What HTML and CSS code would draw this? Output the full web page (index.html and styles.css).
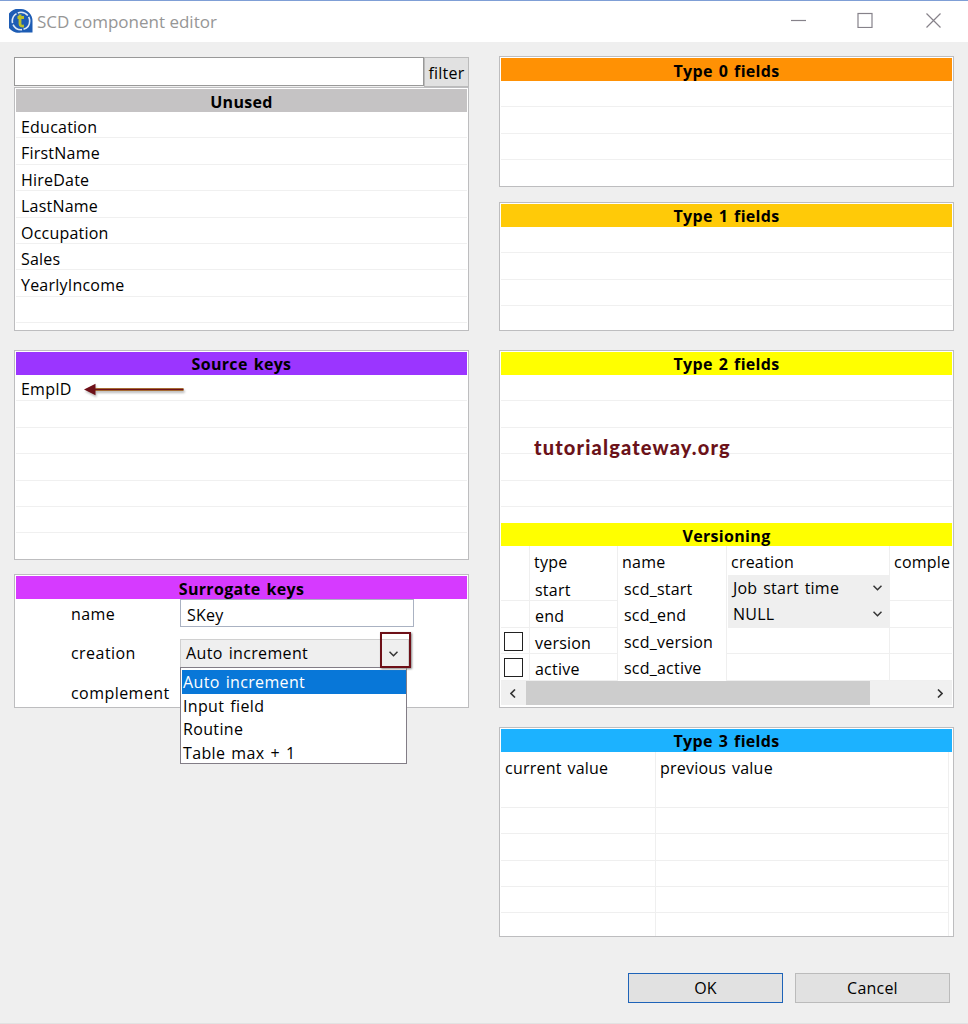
FILE: index.html
```html
<!DOCTYPE html>
<html lang="en">
	<head>
		<meta charset="UTF-8">
		<meta name="viewport" content="width=device-width, initial-scale=1.0">
		<title>SCD component editor</title>
		<link rel="stylesheet" href="styles.css">
	</head>
	<body>
		<header class="titlebar">
			<svg class="logo" width="24" height="24" viewBox="0 0 24 24">
				<path d="M12 0a12 12 0 1 0 0 23.5h11.5V12A12 12 0 0 0 12 0z" fill="#1d5cb4"/>
				<circle cx="12" cy="12" r="8.7" fill="none" stroke="#dfeaf6" stroke-width="1.6" stroke-dasharray="11 1.5"/>
				<path d="M11 5.500v9.500q0 2.500 4 2M8.500 8.500h6.500" fill="none" stroke="#bcc028" stroke-width="2.800"/>
			</svg>
			<span class="title">SCD component editor</span>
			<svg class="controls" width="152" height="16" viewBox="0 0 152 16" fill="none" stroke="#86828a" stroke-width="1.2">
				<path d="M1 8.500h15"/>
				<rect x="68" y="1.500" width="14" height="14"/>
				<path d="M136.500 1.500l14 14M150.500 1.500l-14 14"/>
			</svg>
		</header>
		<main>
			<div class="column">
				<div class="filter">
					<input type="text" class="filter-text">
					<button class="filter-button">filter</button>
				</div>
				<section class="panel unused">
					<h2 class="gray">Unused</h2>
					<div class="row">Education</div>
					<div class="row">FirstName</div>
					<div class="row">HireDate</div>
					<div class="row">LastName</div>
					<div class="row">Occupation</div>
					<div class="row">Sales</div>
					<div class="row">YearlyIncome</div>
					<div class="row"></div>
				</section>
				<section class="panel source">
					<h2 class="purple">Source keys</h2>
					<div class="row">EmpID</div>
					<div class="row"></div>
					<div class="row"></div>
					<div class="row"></div>
					<div class="row"></div>
					<div class="row"></div>
					<div class="row"></div>
					<svg class="arrow" width="104" height="18" viewBox="0 0 104 18">
						<path d="M11 8.500h89.500" stroke="#b98a3c" stroke-width="3"/>
						<path d="M11 8.500h89.500" stroke="#6e1018" stroke-width="1.400"/>
						<path d="M1 8.500l11.500-5.800v11.600z" fill="#6e1018"/>
					</svg>
				</section>
				<section class="panel surrogate">
					<h2 class="magenta">Surrogate keys</h2>
					<div class="form">
						<span class="label">name</span>
						<div class="textbox">SKey</div>
						<span class="label">creation</span>
						<div class="combo">
							<span>Auto increment</span>
							<span class="combo-button">
								<svg width="9" height="6" viewBox="0 0 9 6" fill="none" stroke="#333" stroke-width="1.5"><path d="M.5 .7l4 4 4-4"/></svg>
							</span>
							<div class="options">
								<div class="option selected">Auto increment</div>
								<div class="option">Input field</div>
								<div class="option">Routine</div>
								<div class="option">Table max + 1</div>
							</div>
						</div>
						<span class="label">complement</span>
					</div>
				</section>
			</div>
			<div class="column">
				<section class="panel type0">
					<h2 class="orange">Type 0 fields</h2>
					<div class="row"></div>
					<div class="row"></div>
					<div class="row"></div>
				</section>
				<section class="panel type1">
					<h2 class="amber">Type 1 fields</h2>
					<div class="row"></div>
					<div class="row"></div>
					<div class="row"></div>
				</section>
				<section class="panel type2">
					<h2 class="yellow">Type 2 fields</h2>
					<div class="rows">
						<div class="row"></div>
						<div class="row"></div>
						<div class="row"></div>
						<div class="row"></div>
						<div class="row"></div>
					</div>
					<div class="watermark">tutorialgateway.org</div>
					<h2 class="yellow low">Versioning</h2>
					<div class="versions">
						<div class="cell head"></div>
						<div class="cell head">type</div>
						<div class="cell head">name</div>
						<div class="cell head">creation</div>
						<div class="cell head">comple</div>
						<div class="cell"></div>
						<div class="cell kind">start</div>
						<div class="cell plain">scd_start</div>
						<div class="cell pick">Job start time
							<svg width="9" height="6" viewBox="0 0 9 6" fill="none" stroke="#333" stroke-width="1.5"><path d="M.5 .7l4 4 4-4"/></svg>
						</div>
						<div class="cell"></div>
						<div class="cell"></div>
						<div class="cell kind">end</div>
						<div class="cell plain">scd_end</div>
						<div class="cell pick">NULL
							<svg width="9" height="6" viewBox="0 0 9 6" fill="none" stroke="#333" stroke-width="1.5"><path d="M.5 .7l4 4 4-4"/></svg>
						</div>
						<div class="cell"></div>
						<div class="cell"><span class="check"></span></div>
						<div class="cell kind">version</div>
						<div class="cell plain">scd_version</div>
						<div class="cell"></div>
						<div class="cell"></div>
						<div class="cell"><span class="check"></span></div>
						<div class="cell kind">active</div>
						<div class="cell plain">scd_active</div>
						<div class="cell"></div>
						<div class="cell"></div>
					</div>
					<div class="scrollbar">
						<svg width="6" height="9" viewBox="0 0 6 9" fill="none" stroke="#333" stroke-width="1.6"><path d="M5 .5l-4 4 4 4"/></svg>
						<span class="thumb"></span>
						<svg width="6" height="9" viewBox="0 0 6 9" fill="none" stroke="#333" stroke-width="1.6"><path d="M1 .5l4 4-4 4"/></svg>
					</div>
				</section>
				<section class="panel type3">
					<h2 class="blue">Type 3 fields</h2>
					<div class="values">
						<div class="cell head">current value</div>
						<div class="cell head">previous value</div>
						<div class="cell"></div><div class="cell"></div>
						<div class="cell"></div><div class="cell"></div>
						<div class="cell"></div><div class="cell"></div>
						<div class="cell"></div><div class="cell"></div>
						<div class="cell"></div><div class="cell"></div>
						<div class="cell"></div><div class="cell"></div>
					</div>
				</section>
			</div>
		</main>
		<footer>
			<button class="ok">OK</button>
			<button>Cancel</button>
		</footer>
	</body>
</html>
```
FILE: styles.css
```css
* {
	box-sizing: border-box;
}

body {
	margin: 0;
	height: 1024px;
	overflow: hidden;
	background-color: #efefef;
	border-top: 1px solid #7f9fd6;
	border-bottom: 1px solid #e2e2e2;
	font-family: "Open Sans", "Noto Sans", sans-serif;
	font-size: 16px;
	letter-spacing: 0.22px;
	word-spacing: 1.5px;
	color: #000;
}

.titlebar {
	display: flex;
	align-items: center;
	height: 41px;
	padding: 0 26px 0 9px;
	background-color: #fff;
	color: #969696;
	font-size: 17px;
	letter-spacing: 0;
	word-spacing: 0;
}

.logo {
	margin-bottom: 2px;
}

.title {
	margin: 0 auto 1px 4px;
}

.controls {
	margin-bottom: 3px;
}

main {
	display: grid;
	grid-template-columns: 455px 455px;
	column-gap: 30px;
	height: 895px;
	padding: 14px 14px 0;
}

.column {
	display: flex;
	flex-direction: column;
}

.filter {
	display: flex;
	height: 30px;
	margin-top: 1px;
}

.filter-text {
	width: 410px;
	height: 29px;
	border: 1px solid #999;
	background-color: #fff;
}

.filter-button {
	width: 45px;
	height: 30px;
	padding: 1px 0 0;
}

button {
	border: 1px solid #bbb;
	background-color: #e1e1e1;
	font: inherit;
	letter-spacing: inherit;
	color: #000;
}

.panel {
	position: relative;
	flex: none;
	overflow: hidden;
	border: 1px solid #bdbdbf;
	background-color: #fff;
	padding: 1px 1px 0;
}

.unused { height: 244px; }
.source { height: 210px; margin-top: 19px; }
.surrogate { height: 134px; margin-top: 14px; overflow: visible; }
.type0 { height: 131px; }
.type1 { height: 129px; margin-top: 15px; }
.type2 { height: 358px; margin-top: 19px; }
.type3 { height: 210px; margin-top: 19px; }

h2 {
	height: 23px;
	margin: 0;
	font-size: 16px;
	line-height: 24px;
	font-weight: bold;
	letter-spacing: 0.32px;
	text-align: center;
}

.unused h2,
.surrogate h2,
.type0 h2,
.low {
	line-height: 26px;
}

.gray { background-color: #c5c3c4; }
.purple { background-color: #9b35ff; }
.magenta { background-color: #d63aff; }
.orange { background-color: #ff9104; }
.amber { background-color: #ffca08; }
.yellow { background-color: #ffff00; }
.blue { background-color: #1cb2ff; }

.row {
	height: 26.4px;
	padding-left: 5px;
	border-bottom: 1px solid #f0f0f0;
	line-height: 28px;
}

.unused .row {
	line-height: 30px;
}

.rows {
	height: 148px;
	overflow: hidden;
}

.arrow {
	position: absolute;
	left: 68px;
	top: 30px;
	filter: drop-shadow(1px 2px 1px #bbb);
}

.watermark {
	position: absolute;
	left: 34px;
	top: 84px;
	font-family: Lato, sans-serif;
	font-weight: 900;
	font-size: 20px;
	letter-spacing: 1.15px;
	color: #6b1219;
}

.form {
	display: grid;
	grid-template-columns: 109px 233px;
	grid-template-rows: 28px 29px 29px;
	row-gap: 11px;
	padding-left: 55px;
}

.label {
	line-height: 31px;
	letter-spacing: 0.45px;
}

.textbox {
	width: 234px;
	height: 28px;
	padding-left: 6px;
	border: 1px solid #aab2c2;
	line-height: 30px;
}

.combo {
	position: relative;
	display: flex;
	height: 29px;
	width: 229px;
	margin-top: 1px;
	padding-left: 5px;
	border: 1px solid #d0d0d0;
	background-color: #efefef;
	line-height: 27px;
	letter-spacing: 0.35px;
}

.combo-button {
	position: absolute;
	right: -3px;
	top: -8px;
	z-index: 1;
	display: flex;
	align-items: center;
	justify-content: center;
	width: 31px;
	height: 36px;
	padding: 7px 4px 0 0;
	border: 2px solid #6e1018;
	box-shadow: 1px 1px 2px #888;
}

.options {
	position: absolute;
	left: -1px;
	top: 27px;
	width: 227px;
	height: 97px;
	padding: 2px 0 2px 1px;
	border: 1px solid #827d86;
	background-color: #fff;
}

.option {
	height: 23.5px;
	padding-left: 1px;
	line-height: 24px;
}

.selected {
	background-color: #0877d8;
	color: #fff;
}

.versions {
	display: grid;
	grid-template-columns: 29px 88px 109px 163px 62px;
	grid-template-rows: 29px repeat(4, 26.4px);
	height: 135px;
	overflow: hidden;
}

.cell {
	padding-left: 4px;
	border-right: 1px solid #efefef;
	border-bottom: 1px solid #efefef;
	line-height: 28px;
	white-space: nowrap;
}

.versions .cell:nth-child(5n) {
	border-right: 0;
	overflow: hidden;
}

.head {
	border-bottom: 0;
	line-height: 32px;
}

.versions .head {
	line-height: 33px;
}

.kind {
	padding-left: 5px;
	line-height: 31px;
}

.plain {
	padding-left: 6px;
	border-bottom: 0;
}

.pick {
	display: flex;
	align-items: center;
	justify-content: space-between;
	margin-left: 1px;
	padding: 0 7px 0 5px;
	background-color: #efefef;
}

.check {
	display: block;
	width: 19px;
	height: 19px;
	margin: 4px 0 0 -1px;
	border: 1px solid #222;
}

.scrollbar {
	display: flex;
	align-items: center;
	height: 24px;
	padding: 0 9px;
	background-color: #f0f0f0;
}

.thumb {
	width: 344px;
	height: 24px;
	margin: 0 auto 0 10px;
	background-color: #cdcdcd;
}

.values {
	display: grid;
	grid-template-columns: 155px 293px;
	grid-template-rows: 30px repeat(6, 26.2px);
}

footer {
	display: flex;
	justify-content: flex-end;
	gap: 12px;
	padding: 36px 18px 0 0;
}

footer button {
	width: 155px;
	height: 30px;
	line-height: 29px;
	padding: 0;
}

.ok {
	border-color: #1e63b8;
}
```
